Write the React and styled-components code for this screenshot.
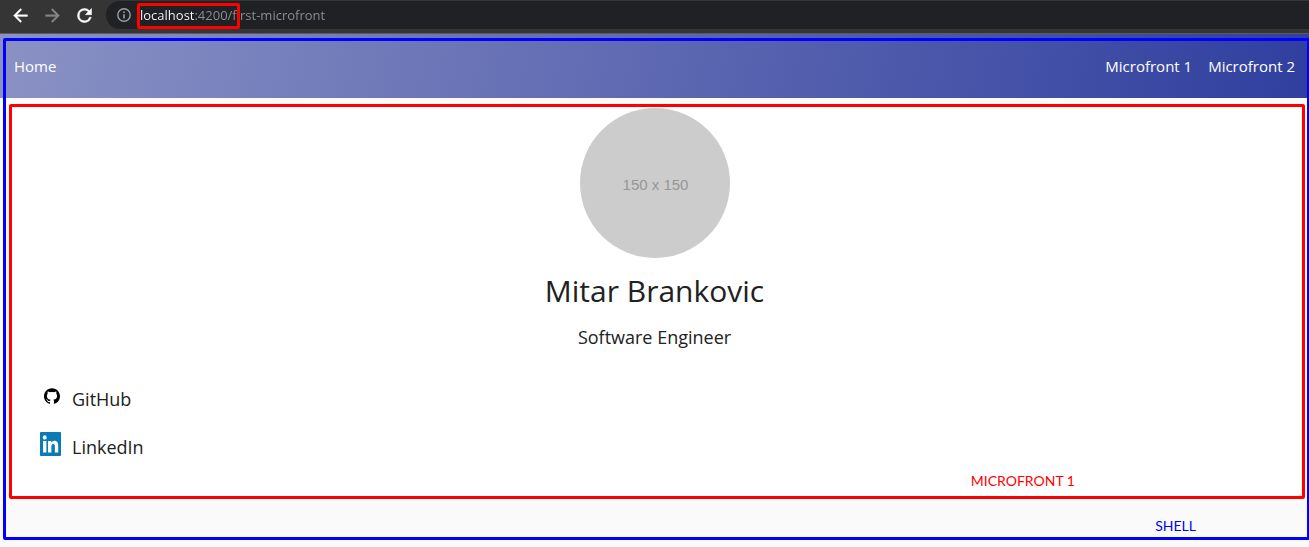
import React from "react";
import styled, { createGlobalStyle } from "styled-components";

const GlobalStyle = createGlobalStyle`
  *, *::before, *::after { box-sizing: border-box; }
  body {
    margin: 0;
    background: #fafafa;
    color: #212121;
    font-family: "Open Sans", "Noto Sans", sans-serif;
    overflow-x: hidden;
  }
`;

const BrowserBar = styled.header`
  display: flex;
  align-items: center;
  height: 34px;
  padding: 0 0 3px 4px;
  background: #353535;
  border-bottom: 1px solid #5c5c5c;
`;

const ToolButton = styled.button`
  display: flex;
  align-items: center;
  justify-content: center;
  width: 32px;
  height: 28px;
  padding: 0;
  border: 0;
  background: none;
  color: ${(p) => (p.disabled ? "#868686" : "#ffffff")};
`;

const AddressBar = styled.div`
  flex: 1;
  display: flex;
  align-items: center;
  height: 28px;
  margin-left: 6px;
  padding-left: 10px;
  gap: 8px;
  border-radius: 14px 0 0 14px;
  background: #202124;
  color: #9aa0a6;
`;

const AddressField = styled.div`
  position: relative;
  flex: 1;
  display: flex;
`;

const AddressInput = styled.input`
  flex: 1;
  height: 28px;
  padding: 0;
  border: 0;
  outline: 0;
  font: 400 13px/28px "Open Sans", "Noto Sans", sans-serif;
  color: #9aa0a6;
  background: linear-gradient(90deg, #ffffff 55px, #8d9196 55px);
  background-clip: text;
  -webkit-background-clip: text;
  -webkit-text-fill-color: transparent;
`;

const Frame = styled.div`
  position: absolute;
  inset: ${(p) => p.$inset};
  width: ${(p) => p.$width || "auto"};
  display: flex;
  align-items: flex-end;
  justify-content: flex-end;
  padding: ${(p) => p.$padding || "0"};
  border: 3px solid ${(p) => p.$color};
  border-radius: 2px;
  color: ${(p) => p.$color};
  font: 400 14px/16px Lato, sans-serif;
  pointer-events: none;
`;

const Shell = styled.div`
  position: relative;
  padding-bottom: 44px;
`;

const NavBar = styled.nav`
  display: flex;
  align-items: center;
  justify-content: space-between;
  height: 64px;
  padding: 0 14px;
  background: linear-gradient(100deg, #8a92c4, #303f9f);
`;

const NavGroup = styled.div`
  display: flex;
  gap: 16px;
`;

const NavLink = styled.a`
  color: #ffffff;
  font-size: 15px;
  line-height: 24px;
  text-decoration: none;
`;

const Card = styled.main`
  position: relative;
  margin: 8px 8px 0;
  padding: 2px 0 24px;
  background: #ffffff;
  border-radius: 4px;
  box-shadow: 0 1px 1px rgba(0, 0, 0, 0.3);
`;

const Profile = styled.section`
  display: flex;
  flex-direction: column;
  align-items: center;
`;

const Avatar = styled.div`
  display: flex;
  align-items: center;
  justify-content: center;
  width: 150px;
  height: 150px;
  padding: 4px 0 0 2px;
  border-radius: 50%;
  background: #cccccc;
  color: #969696;
  font: 400 15px/16px "Liberation Sans", Arial, sans-serif;
`;

const Name = styled.h1`
  margin: 13px 0 0;
  font-size: 30px;
  font-weight: 400;
  line-height: 40px;
`;

const Role = styled.p`
  margin: 14px 0 0;
  font-size: 18px;
  font-weight: 400;
  line-height: 24px;
`;

const LinkList = styled.ul`
  margin: 27px 0 0;
  padding: 0 32px;
  list-style: none;
`;

const LinkItem = styled.li`
  display: flex;
  height: 48px;
  padding-top: 8px;
`;

const ProfileLink = styled.a`
  display: flex;
  align-items: flex-start;
  gap: 8px;
  color: #212121;
  font-size: 18px;
  font-weight: 400;
  line-height: 30px;
  text-decoration: none;
`;

const IconSlot = styled.span`
  display: flex;
  align-items: center;
  justify-content: ${(p) => p.$align || "center"};
  width: 24px;
  height: 24px;
`;

const ArrowIcon = ({ flip }) => (
  <svg width="21" height="21" viewBox="0 0 24 24" fill="currentColor" aria-hidden="true">
    <path
      transform={flip ? "matrix(-1 0 0 1 24 0)" : undefined}
      d="M20 11H7.8l5.6-5.6L12 4l-8 8 8 8 1.4-1.4L7.8 13H20z"
      stroke="currentColor"
      strokeWidth="0.4"
    />
  </svg>
);

const ReloadIcon = () => (
  <svg width="21" height="21" viewBox="0 0 24 24" fill="currentColor" aria-hidden="true">
    <path
      d="M17.65 6.35A7.96 7.96 0 0 0 12 4a8 8 0 1 0 7.73 10h-2.08A6 6 0 1 1 12 6c1.66 0 3.14.69 4.22 1.78L13 11h7V4z"
      stroke="currentColor"
      strokeWidth="0.6"
    />
  </svg>
);

const InfoIcon = () => (
  <svg width="16" height="16" viewBox="0 0 16 16" aria-hidden="true">
    <circle cx="8" cy="8" r="6.2" fill="none" stroke="currentColor" strokeWidth="1.4" />
    <path d="M7.2 4.5h1.6v1.6H7.2zM7.2 7.2h1.6v4.3H7.2z" fill="currentColor" />
  </svg>
);

const GitHubIcon = () => (
  <svg width="16" height="16" viewBox="0 0 24 24" fill="#000000" aria-hidden="true">
    <path d="M12 .297c-6.63 0-12 5.373-12 12 0 5.303 3.438 9.8 8.205 11.385.6.113.82-.258.82-.577 0-.285-.01-1.04-.015-2.04-3.338.724-4.042-1.61-4.042-1.61C4.422 18.07 3.633 17.7 3.633 17.7c-1.087-.744.084-.729.084-.729 1.205.084 1.838 1.236 1.838 1.236 1.07 1.835 2.809 1.305 3.495.998.108-.776.417-1.305.76-1.605-2.665-.3-5.466-1.332-5.466-5.93 0-1.31.465-2.38 1.235-3.22-.135-.303-.54-1.523.105-3.176 0 0 1.005-.322 3.3 1.23.96-.267 1.98-.399 3-.405 1.02.006 2.04.138 3 .405 2.28-1.552 3.285-1.23 3.285-1.23.645 1.653.24 2.873.12 3.176.765.84 1.23 1.91 1.23 3.22 0 4.61-2.805 5.625-5.475 5.92.42.36.81 1.096.81 2.22 0 1.606-.015 2.896-.015 3.286 0 .315.21.69.825.57C20.565 22.092 24 17.592 24 12.297c0-6.627-5.373-12-12-12" />
  </svg>
);

const LinkedInIcon = () => (
  <svg width="21" height="24" viewBox="0 0 24 24" preserveAspectRatio="none" aria-hidden="true">
    <rect width="24" height="24" rx="1" fill="#0a7bb5" />
    <circle cx="5.4" cy="5.4" r="2.2" fill="#ffffff" />
    <path
      d="M3.5 9h3.8v11.6H3.5zM9.2 9h3.6v1.6c.6-1 1.8-1.9 3.6-1.9 3.7 0 4.4 2.4 4.4 5.6v6.3H17v-5.7c0-1.4 0-3-1.9-3s-2.1 1.4-2.1 2.9v5.8H9.2z"
      fill="#ffffff"
    />
  </svg>
);

export default function App() {
  return (
    <>
      <GlobalStyle />
      <BrowserBar>
        <ToolButton aria-label="Back">
          <ArrowIcon />
        </ToolButton>
        <ToolButton aria-label="Forward" disabled>
          <ArrowIcon flip />
        </ToolButton>
        <ToolButton aria-label="Reload">
          <ReloadIcon />
        </ToolButton>
        <AddressBar>
          <InfoIcon />
          <AddressField>
            <AddressInput
              type="text"
              aria-label="Address"
              defaultValue="localhost:4200/first-microfront"
            />
            <Frame $color="#ff0000" $inset="2px auto 0 -3px" $width="103px" />
          </AddressField>
        </AddressBar>
      </BrowserBar>

      <Shell>
        <NavBar>
          <NavLink href="#home">Home</NavLink>
          <NavGroup>
            <NavLink href="#first-microfront">Microfront 1</NavLink>
            <NavLink href="#second-microfront">Microfront 2</NavLink>
          </NavGroup>
        </NavBar>

        <Card>
          <Profile>
            <Avatar>150 x 150</Avatar>
            <Name>Mitar Brankovic</Name>
            <Role>Software Engineer</Role>
          </Profile>
          <LinkList>
            <LinkItem>
              <ProfileLink href="#github">
                <IconSlot>
                  <GitHubIcon />
                </IconSlot>
                GitHub
              </ProfileLink>
            </LinkItem>
            <LinkItem>
              <ProfileLink href="#linkedin">
                <IconSlot $align="flex-start">
                  <LinkedInIcon />
                </IconSlot>
                LinkedIn
              </ProfileLink>
            </LinkItem>
          </LinkList>
          <Frame $color="#ff0000" $inset="-2px -4px -3px 1px" $padding="0 227px 7px 0">
            MICROFRONT 1
          </Frame>
        </Card>

        <Frame $color="#0000ff" $inset="4px -1px 0 3px" $padding="0 111px 3px 0">
          SHELL
        </Frame>
      </Shell>
    </>
  );
}
